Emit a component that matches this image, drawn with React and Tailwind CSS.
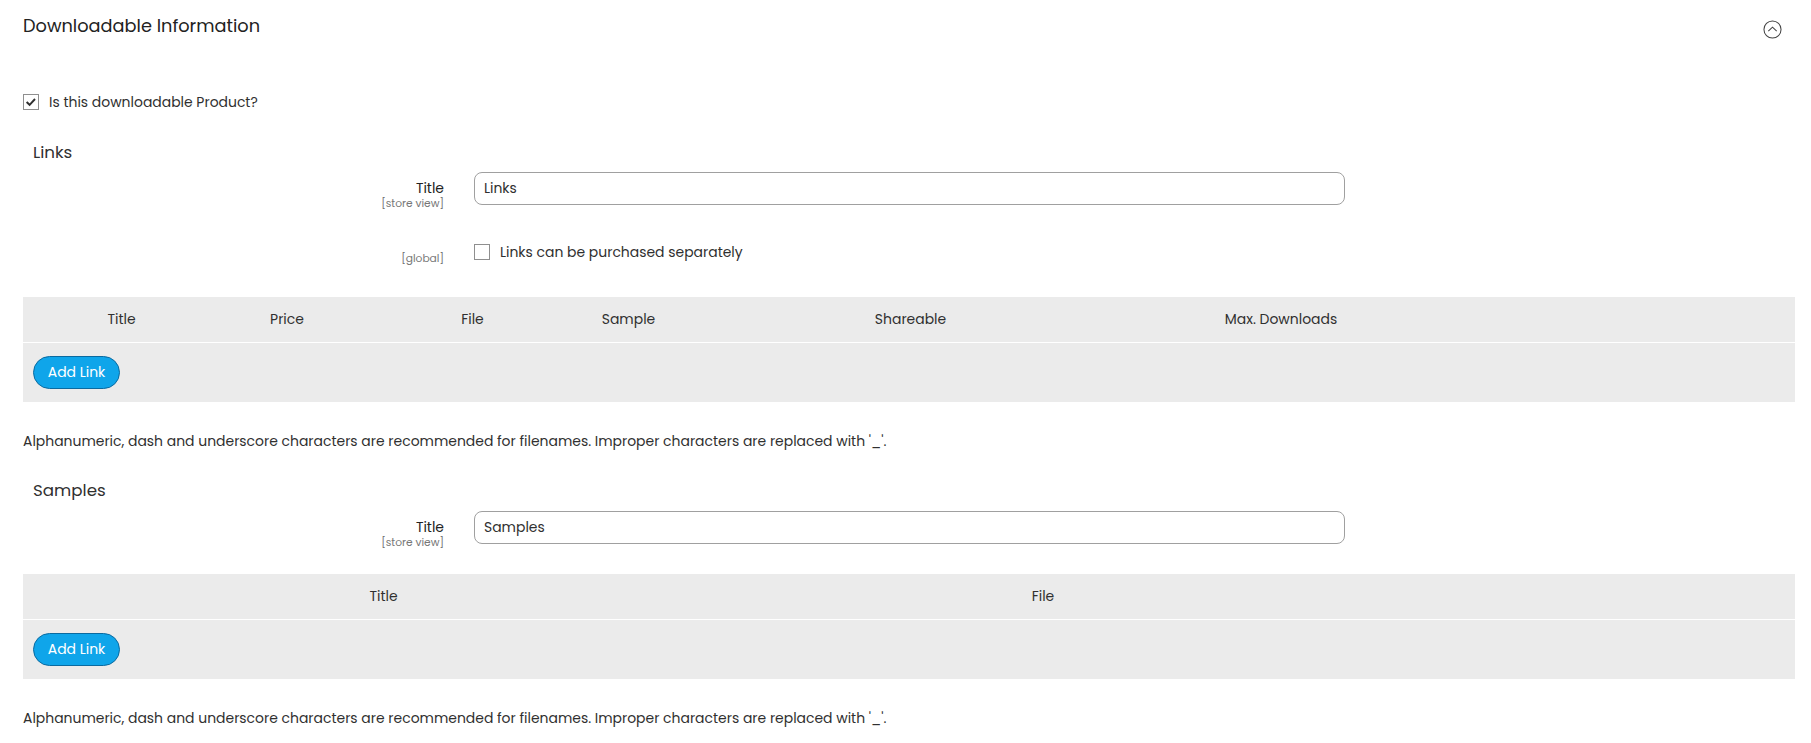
function Check({ checked }) {
  return (
    <span className="flex h-4 w-4 shrink-0 items-center justify-center border border-[#8f8f8f] bg-white">
      {checked && (
        <svg viewBox="0 0 16 16" className="h-[14px] w-[14px]" fill="none" stroke="#303030" strokeWidth="2.2">
          <path d="M3 8l3.4 3.2L12.6 4.6" />
        </svg>
      )}
    </span>
  );
}

function AddLink() {
  return (
    <button className="h-[33px] w-[87px] rounded-[17px] border border-[#0a6aa0] bg-[#0fa5ea] text-[13.95px] text-white">
      Add Link
    </button>
  );
}

function TitleRow({ value }) {
  return (
    <div className="flex h-[33px] items-start">
      <div className="w-[444px] shrink-0 pt-[8px] text-right">
        <div className="text-[13.95px] leading-[16px] text-[#222]">Title</div>
        <div className="pt-[2px] text-[10.7px] leading-[12px] text-[#777]">[store view]</div>
      </div>
      <div className="ml-[30px] flex h-[33px] w-[871px] items-center rounded-[8px] border border-[#a0a0a0] pl-[9px] text-[13.95px] text-[#303030]">
        {value}
      </div>
    </div>
  );
}

function Table({ cols, template }) {
  return (
    <div className="ml-[23px] mr-4 bg-[#ebebeb]">
      <div className={`grid h-[46px] items-center border-b border-white text-center text-[13.95px] text-[#303030] ${template}`}>
        {cols.map((c, i) => (
          <div key={i}>{c}</div>
        ))}
      </div>
      <div className="flex h-[59px] items-center pl-[10px]">
        <AddLink />
      </div>
    </div>
  );
}

function Note({ className }) {
  return (
    <p className={`pl-[23px] text-[13.95px] leading-[20px] text-[#303030] ${className}`}>
      Alphanumeric, dash and underscore characters are recommended for filenames. Improper characters are replaced with '_'.
    </p>
  );
}

export default function App() {
  return (
    <div className="h-[743px] w-[1811px] overflow-hidden bg-white font-['Poppins','Open_Sans','Noto_Sans',sans-serif] text-[#303030]">
      <div className="flex h-[94px] items-start justify-between pl-[23px] pr-[29px] pt-[14px]">
        <h2 className="text-[17.75px] leading-[24px] text-[#222]">Downloadable Information</h2>
        <svg viewBox="0 0 20 20" className="mt-[6px] h-[19px] w-[19px]" fill="none" stroke="#444" strokeWidth="1.1">
          <circle cx="10" cy="10" r="9" />
          <path d="M5.6 11.6L10 7.6l4.4 4" />
        </svg>
      </div>

      <label className="flex h-4 items-center gap-[10px] pl-[23px] text-[13.95px] text-[#303030]">
        <Check checked />
        Is this downloadable Product?
      </label>

      <h3 className="mt-[30px] pl-[33px] text-[16.7px] leading-[24px] text-[#303030]">Links</h3>
      <div className="mt-[8px]">
        <TitleRow value="Links" />
      </div>

      <div className="mt-[39px] flex h-4 items-center">
        <div className="w-[444px] shrink-0 pt-[14px] text-right text-[10.7px] leading-[12px] text-[#777]">[global]</div>
        <div className="ml-[30px] flex items-center gap-[10px] text-[13.95px] text-[#303030]">
          <Check />
          Links can be purchased separately
        </div>
      </div>

      <div className="mt-[37px]">
        <Table
          template="grid-cols-[197px_134px_237px_75px_489px_252px_1fr]"
          cols={["Title", "Price", "File", "Sample", "Shareable", "Max. Downloads", ""]}
        />
      </div>
      <Note className="mt-[29px]" />

      <h3 className="mt-[27px] pl-[33px] text-[16.7px] leading-[24px] text-[#303030]">Samples</h3>
      <div className="mt-[9px]">
        <TitleRow value="Samples" />
      </div>

      <div className="mt-[30px]">
        <Table template="grid-cols-[721px_598px_1fr]" cols={["Title", "File", ""]} />
      </div>
      <Note className="mt-[29px]" />
    </div>
  );
}
